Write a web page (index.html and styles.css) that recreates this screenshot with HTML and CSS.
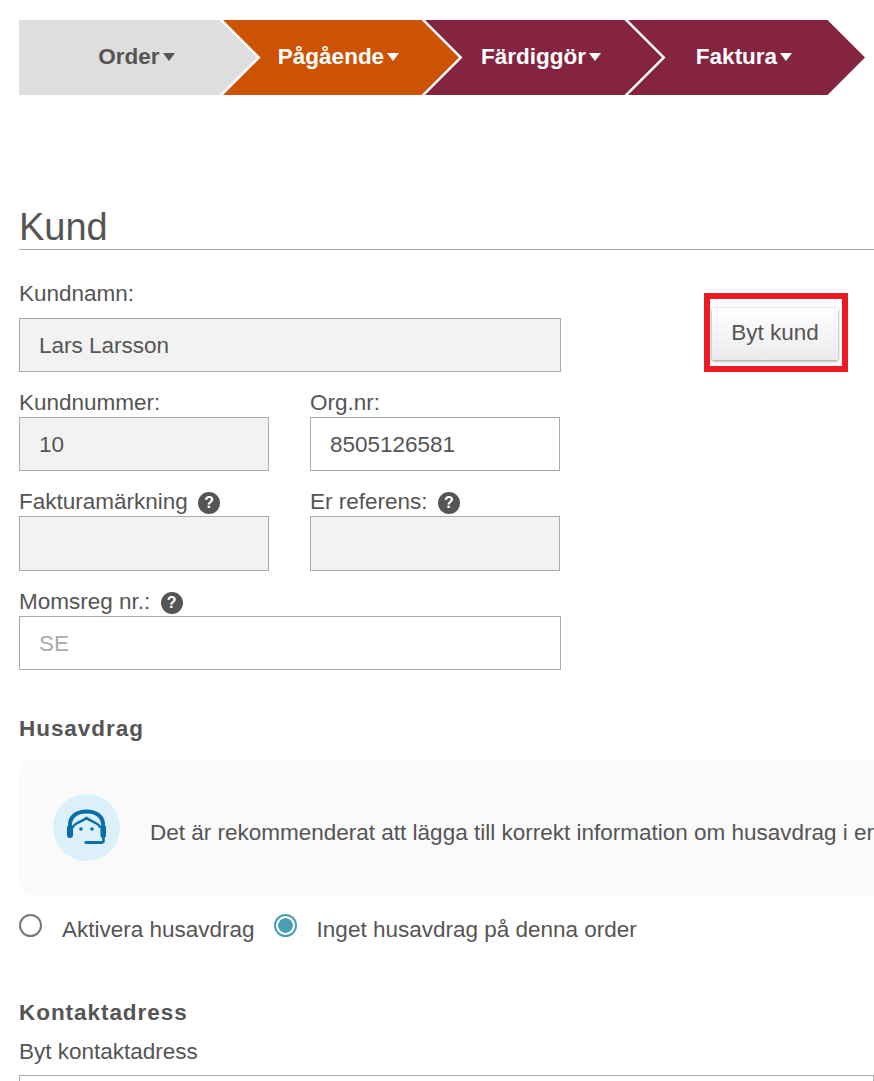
FILE: index.html
```html
<!DOCTYPE html>
<html lang="sv">
<head>
<meta charset="utf-8">
<title>Kund</title>
<link rel="stylesheet" href="styles.css">
</head>
<body>
<nav class="steps">
  <div class="step step-first step-done"><span>Order</span><i class="caret"></i></div>
  <div class="step step-active"><span>Pågående</span><i class="caret"></i></div>
  <div class="step step-todo"><span>Färdiggör</span><i class="caret"></i></div>
  <div class="step step-todo step-last"><span>Faktura</span><i class="caret"></i></div>
</nav>
<main class="content">
  <h1 class="title">Kund</h1>
  <div class="customer">
    <div class="fields">
      <div class="field field-first">
        <label class="label label-spaced">Kundnamn:</label>
        <div class="input input-locked">Lars Larsson</div>
      </div>
      <div class="pair">
        <div class="field">
          <label class="label">Kundnummer:</label>
          <div class="input input-locked">10</div>
        </div>
        <div class="field">
          <label class="label">Org.nr:</label>
          <div class="input">8505126581</div>
        </div>
      </div>
      <div class="pair">
        <div class="field">
          <label class="label">Fakturamärkning <span class="help">?</span></label>
          <div class="input input-locked input-tall"></div>
        </div>
        <div class="field">
          <label class="label">Er referens: <span class="help">?</span></label>
          <div class="input input-locked input-tall"></div>
        </div>
      </div>
      <div class="field">
        <label class="label">Momsreg nr.: <span class="help">?</span></label>
        <div class="input input-placeholder">SE</div>
      </div>
    </div>
    <aside class="action">
      <div class="highlight"><button class="button" type="button">Byt kund</button></div>
    </aside>
  </div>

  <h2 class="subhead subhead-house">Husavdrag</h2>
  <div class="notice">
    <span class="notice-icon">
      <svg width="67" height="67" viewBox="0 0 67 67" aria-hidden="true">
        <circle cx="33.5" cy="33.5" r="33.5" fill="#dcf0fb"/>
        <g fill="none" stroke="#0a6ea8" stroke-linecap="round">
          <path stroke-width="4" d="M17 33C16 23 23 17.500 33.500 17.500S51 23 50 33"/>
          <path stroke-width="2.400" d="M20 33C22 28 29 28 33.500 24C38 28 45 28 47 33"/>
          <path stroke-width="3" d="M33 48.500H49"/>
          <path stroke-width="2.600" d="M50.500 42V47.500"/>
        </g>
        <rect x="14" y="31" width="6" height="13" rx="3" fill="#0a6ea8"/>
        <rect x="47.500" y="31" width="5.500" height="13" rx="2.700" fill="#0a6ea8"/>
        <circle cx="28" cy="35" r="1.800" fill="#0a6ea8"/>
        <circle cx="39" cy="35" r="1.800" fill="#0a6ea8"/>
      </svg>
    </span>
    <p class="notice-text">Det är rekommenderat att lägga till korrekt information om husavdrag i er</p>
  </div>
  <div class="radios">
    <label class="radio"><span class="radio-dot"></span><span class="radio-label">Aktivera husavdrag</span></label>
    <label class="radio"><span class="radio-dot radio-on"></span><span class="radio-label">Inget husavdrag på denna order</span></label>
  </div>

  <h2 class="subhead subhead-contact">Kontaktadress</h2>
  <label class="label">Byt kontaktadress</label>
  <div class="input input-bottom"></div>
</main>
</body>
</html>
```
FILE: styles.css
```css
* { box-sizing: border-box; }
html, body { margin: 0; height: 1081px; overflow: hidden; background: #fff; }
body { font-family: "Liberation Sans", Arial, sans-serif; color: #555; font-size: 22.5px; }

.steps { display: flex; margin: 20px 0 0 19px; }
.step {
  display: flex; align-items: center; justify-content: center;
  height: 75px; width: 237px; margin-left: -34px; padding: 0 5px 1px 0;
  font-size: 22.5px; font-weight: 700; color: #fff;
  clip-path: polygon(0 0, calc(100% - 37.5px) 0, 100% 50%, calc(100% - 37.5px) 100%, 0 100%, 37.5px 50%);
}
.step-first { margin-left: 0; width: 238px; padding-right: 3px; clip-path: polygon(0 0, calc(100% - 37.5px) 0, 100% 50%, calc(100% - 37.5px) 100%, 0 100%); }
.step-done { background: #dedede; color: #555; }
.step-active { background: #cc5204; width: 236px; }
.step-todo { background: #852441; }
.caret { width: 0; height: 0; margin-left: 3px; border: 6px solid transparent; border-top: 8px solid currentColor; border-bottom: 0; }

.content { padding-left: 19px; }
.title { margin: 109px 0 0; height: 46px; font-size: 38px; line-height: 46px; font-weight: 400; border-bottom: 1px solid #aaa; }

.customer { display: flex; margin-top: 32px; }
.fields { width: 542px; display: flex; flex-direction: column; gap: 19px; }
.label { display: block; height: 25px; line-height: 24px; margin-bottom: 1px; }
.label-spaced { margin-bottom: 11px; }
.pair { display: flex; gap: 41px; }
.pair .field { width: 250px; }
.input { height: 54px; padding: 1px 19px 0; line-height: 52px; border: 1px solid #aaa; background: #fff; }
.input-locked { background: #f2f2f2; }
.input-tall { height: 55px; }
.input-placeholder { color: #aaa; }
.input-bottom { height: 40px; margin-top: 10px; }

.help {
  display: inline-flex; align-items: center; justify-content: center;
  width: 22px; height: 22px; margin-left: 4px; border-radius: 50%;
  background: #555; color: #fff; font-size: 16px; font-weight: 700; vertical-align: 1px; line-height: 22px;
}

.action { margin-left: 143px; margin-top: 11px; }
.highlight { width: 144px; height: 79px; padding: 9px 8px 0 2px; border: 6px solid #ed1c24; }
.button {
  display: block; width: 126px; height: 52px; padding: 0 0 2px; border: 0;
  background: linear-gradient(#fff, #ebebeb); color: #555;
  font: 400 22.5px "Liberation Sans", Arial, sans-serif;
  box-shadow: 0 1px 3px rgba(0,0,0,.45);
}

.subhead { margin: 0; font-size: 22.5px; font-weight: 700; line-height: 26px; letter-spacing: .95px; }
.subhead-house { margin-top: 46px; }
.subhead-contact { margin-top: 54px; }
.subhead-contact + .label { margin-top: 14px; }

.notice {
  display: flex; align-items: center; height: 135px; margin-top: 18px; padding-left: 34px;
  border-radius: 14px 0 0 14px; background: #fafafa;
}
.notice-icon { display: block; width: 67px; height: 67px; flex: none; }
.notice-text { margin: 10px 0 0 30px; white-space: nowrap; }

.radios { display: flex; gap: 19px; margin-top: 19px; }
.radio { display: flex; align-items: flex-start; }
.radio-dot { width: 23px; height: 23px; border: 2px solid #777; border-radius: 50%; background: #fff; flex: none; }
.radio-on { border-color: #4a9eb2; background: radial-gradient(circle, #4a9eb2 0 7px, #fff 7.5px); }
.radio-label { margin-left: 20px; line-height: 32px; }
```
